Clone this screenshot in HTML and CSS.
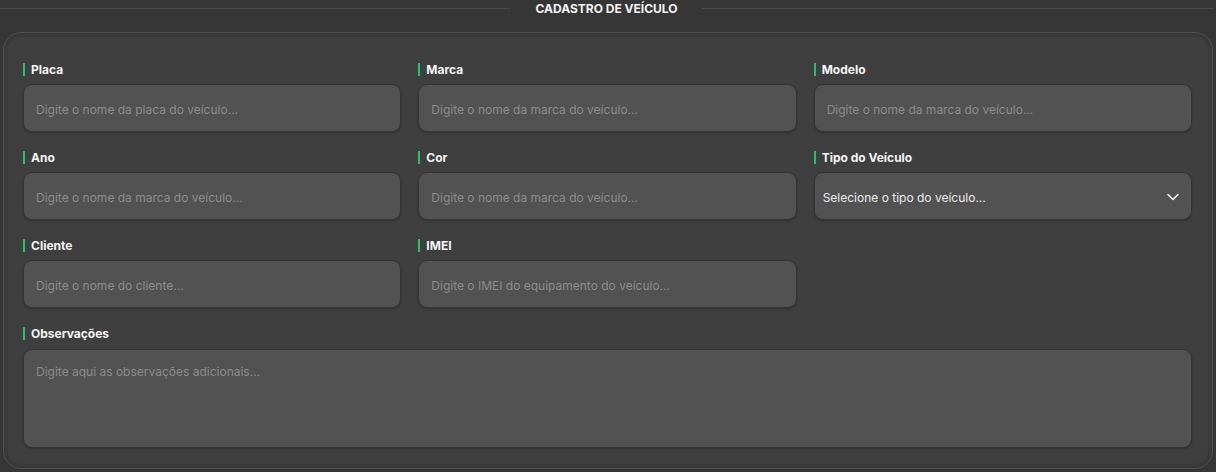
FILE: index.html
```html
<!DOCTYPE html>
<html lang="pt-BR">
<head>
<meta charset="utf-8">
<title>Cadastro de Veículo</title>
<link rel="stylesheet" href="styles.css">
</head>
<body>
<div class="section-title">
  <span class="line"></span>
  <h2>CADASTRO DE VEÍCULO</h2>
  <span class="line"></span>
</div>
<form class="card">
  <div class="grid">
    <div class="field">
      <label class="label">Placa</label>
      <input class="input" type="text" placeholder="Digite o nome da placa do veículo...">
    </div>
    <div class="field">
      <label class="label">Marca</label>
      <input class="input" type="text" placeholder="Digite o nome da marca do veículo...">
    </div>
    <div class="field">
      <label class="label">Modelo</label>
      <input class="input" type="text" placeholder="Digite o nome da marca do veículo...">
    </div>
    <div class="field">
      <label class="label">Ano</label>
      <input class="input" type="text" placeholder="Digite o nome da marca do veículo...">
    </div>
    <div class="field">
      <label class="label">Cor</label>
      <input class="input" type="text" placeholder="Digite o nome da marca do veículo...">
    </div>
    <div class="field">
      <label class="label">Tipo do Veículo</label>
      <div class="select">
        <span>Selecione o tipo do veículo...</span>
        <svg class="chevron" width="14" height="14" viewBox="0 0 14 14" fill="none"><path d="M2 4.5 L7 9.5 L12 4.5" stroke="#f2f2f2" stroke-width="1.6" stroke-linecap="round" stroke-linejoin="round"/></svg>
      </div>
    </div>
    <div class="field">
      <label class="label">Cliente</label>
      <input class="input" type="text" placeholder="Digite o nome do cliente...">
    </div>
    <div class="field">
      <label class="label">IMEI</label>
      <input class="input" type="text" placeholder="Digite o IMEI do equipamento do veículo...">
    </div>
    <div class="field"></div>
    <div class="field full">
      <label class="label">Observações</label>
      <textarea class="textarea" placeholder="Digite aqui as observações adicionais..."></textarea>
    </div>
  </div>
</form>
</body>
</html>
```

FILE: styles.css
```css
* { box-sizing: border-box; }

body {
  margin: 0;
  background: #363636;
  font-family: Inter, "Noto Sans", "DejaVu Sans", sans-serif;
  color: #f2f2f2;
  height: 472px;
  overflow: hidden;
}

.section-title {
  display: flex;
  align-items: center;
  gap: 24px;
  height: 17px;
  padding-right: 3px;
}

.section-title .line {
  flex: 1;
  height: 1px;
  background: #4a4a4a;
}

.section-title h2 {
  margin: 0;
  font-size: 12px;
  font-weight: 700;
  line-height: 17px;
  color: #f4f4f4;
}

.card {
  margin: 15px 3px 0;
  height: 437px;
  border: 1px solid #505050;
  border-radius: 18px;
  background: #3f3f3f;
  box-shadow: inset 0 0 0 4px #393939;
  padding: 29px 20px 20px 19px;
}

.grid {
  display: grid;
  grid-template-columns: repeat(3, 1fr);
  column-gap: 17px;
  row-gap: 18px;
}

.field {
  display: flex;
  flex-direction: column;
  gap: 7px;
}

.field.full {
  grid-column: 1 / -1;
  gap: 8px;
}

.label {
  display: flex;
  align-items: center;
  gap: 6px;
  height: 15px;
  font-size: 12px;
  font-weight: 700;
  color: #f5f5f5;
}

.label::before {
  content: "";
  width: 2px;
  height: 13px;
  background: #2ebd6b;
}

.input,
.select,
.textarea {
  width: 100%;
  height: 48px;
  border: 1px solid #353535;
  border-radius: 9px;
  background: #525252;
  box-shadow: 0 1px 2px rgba(0, 0, 0, 0.25);
  font-family: inherit;
  font-size: 12px;
  color: #f2f2f2;
  outline: none;
}

.input {
  padding: 2px 12px 0;
}

.input::placeholder,
.textarea::placeholder {
  color: #8c8c8c;
}

.select {
  display: flex;
  align-items: center;
  justify-content: space-between;
  padding: 2px 11px 0 8px;
  color: #ececec;
}

.chevron {
  display: block;
}

.textarea {
  height: 99px;
  padding: 14px 12px;
  resize: none;
}
```
